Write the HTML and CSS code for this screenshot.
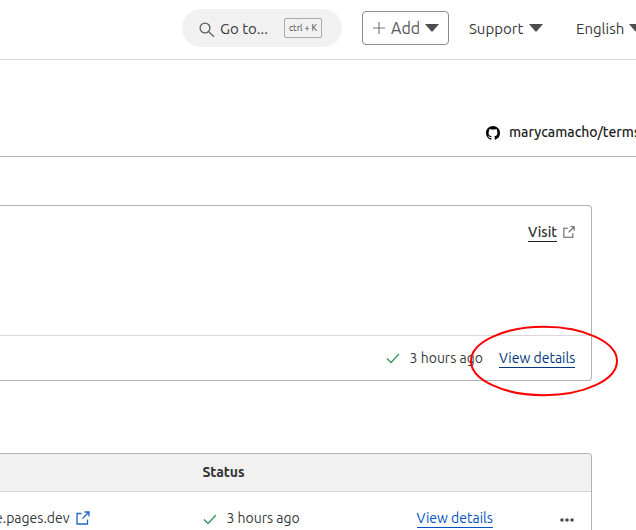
FILE: index.html
```
<!DOCTYPE html>
<html lang="en">
<head>
<meta charset="utf-8">
<title>Pages deployments</title>
<link rel="stylesheet" href="styles.css">
</head>
<body>
<header class="topbar">
  <div class="search">
    <svg class="search-icon" width="16" height="16" viewBox="0 0 16 16"><circle cx="6" cy="6" r="4.9"/><path d="M9.6 9.6 15 14.7"/></svg>
    <span class="search-label">Go to...</span>
    <kbd>ctrl + K</kbd>
  </div>
  <button class="add">
    <svg class="plus" width="12" height="12" viewBox="0 0 12 12"><path d="M6 0v12M0 6h12"/></svg>
    <span class="add-label">Add</span>
    <svg class="caret" width="14" height="8" viewBox="0 0 14 8"><path d="M0 0h14L8 7Q7 8 6 7Z"/></svg>
  </button>
  <div class="menu support"><span class="support-label">Support</span><svg class="caret" width="14" height="8" viewBox="0 0 14 8"><path d="M0 0h14L8 7Q7 8 6 7Z"/></svg></div>
  <div class="menu language"><span class="language-label">English</span><svg class="caret" width="14" height="8" viewBox="0 0 14 8"><path d="M0 0h14L8 7Q7 8 6 7Z"/></svg></div>
</header>
<section class="repo">
  <svg width="14" height="14" viewBox="0 0 16 16"><path d="M8 0C3.58 0 0 3.58 0 8c0 3.54 2.29 6.53 5.47 7.59.4.07.55-.17.55-.38 0-.19-.01-.82-.01-1.49-2.01.37-2.53-.49-2.69-.94-.09-.23-.48-.94-.82-1.13-.28-.15-.68-.52-.01-.53.63-.01 1.08.58 1.23.82.72 1.21 1.87.87 2.33.66.07-.52.28-.87.51-1.07-1.78-.2-3.64-.89-3.64-3.95 0-.87.31-1.59.82-2.15-.08-.2-.36-1.02.08-2.12 0 0 .67-.21 2.2.82.64-.18 1.32-.27 2-.27s1.36.09 2 .27c1.53-1.04 2.2-.82 2.2-.82.44 1.1.16 1.92.08 2.12.51.56.82 1.27.82 2.15 0 3.07-1.87 3.75-3.65 3.95.29.25.54.73.54 1.48 0 1.07-.01 1.93-.01 2.2 0 .21.15.46.55.38A8.01 8.01 0 0 0 16 8c0-4.42-3.58-8-8-8Z"/></svg>
  <span class="repo-name">marycamacho/terms</span>
</section>
<main>
  <section class="card">
    <div class="card-body">
      <a class="visit">Visit</a>
      <svg class="external" width="12" height="12" viewBox="0 0 14 14"><path d="M5.5 2.5H1v10.5h10.5V8.5M8.5 1H13v4.5M13 1 6.5 7.5"/></svg>
    </div>
    <div class="card-footer">
      <svg class="check" width="14" height="11" viewBox="0 0 14 11"><path d="m1 5.5 4 4L13 1"/></svg>
      <span class="time">3 hours ago</span>
      <div class="highlighted"><a class="details">View details</a><svg class="ring" width="148" height="72" viewBox="0 0 148 72"><ellipse cx="74" cy="36" rx="73" ry="34.2"/></svg></div>
    </div>
  </section>
  <section class="table">
    <div class="table-head">Status</div>
    <div class="table-row">
      <span class="domain">e.pages.dev</span>
      <svg class="external" width="14" height="14" viewBox="0 0 14 14"><path d="M5.5 2.5H1v10.5h10.5V8.5M8.5 1H13v4.5M13 1 6.5 7.5"/></svg>
      <svg class="check" width="14" height="11" viewBox="0 0 14 11"><path d="m1 5.5 4 4L13 1"/></svg>
      <span class="time">3 hours ago</span>
      <a class="details">View details</a>
      <svg class="more" width="14" height="4" viewBox="0 0 14 4"><circle cx="2" cy="2" r="1.8"/><circle cx="7" cy="2" r="1.8"/><circle cx="12" cy="2" r="1.8"/></svg>
    </div>
  </section>
</main>
</body>
</html>
```
FILE: styles.css
```
* { box-sizing: border-box; }
body {
  margin: 0;
  width: 636px;
  height: 530px;
  overflow: hidden;
  background: #fff;
  color: #36393a;
  font: 14px/20px Ubuntu, "Noto Sans", sans-serif;
  white-space: nowrap;
}
svg { flex: none; fill: none; display: block; }
.topbar {
  display: flex;
  align-items: center;
  height: 60px;
  padding: 0 0 3px 182px;
  border-bottom: 1px solid #d5d5d5;
  font-size: 15px;
  overflow: hidden;
}
.search {
  display: flex;
  flex: none;
  align-items: center;
  width: 160px;
  height: 38px;
  margin-right: 20px;
  padding-left: 17px;
  border-radius: 19px;
  background: #f1f1f1;
}
.search-icon { stroke: #5c5f60; stroke-width: 1.3; margin: 3px 5px 0 0; }
.search-label { width: 64px; padding-top: 2px; }
kbd {
  width: 38px;
  height: 20px;
  border: 1px solid #aaa;
  border-radius: 2px;
  color: #444;
  font: 9px/18px Ubuntu, "Noto Sans", sans-serif;
  text-align: center;
}
.add {
  display: flex;
  flex: none;
  align-items: center;
  width: 87px;
  height: 34px;
  margin-right: 20px;
  padding: 0 0 0 10px;
  border: 1px solid #8b8b8b;
  border-radius: 4px;
  background: #fff;
  color: #595959;
  font: 16px/20px Ubuntu, "Noto Sans", sans-serif;
}
.plus { stroke: #777; stroke-width: 1.2; }
.add-label { width: 34px; margin-left: 6px; text-align: left; }
.caret { fill: #4d4d4d; }
.menu { display: flex; flex: none; align-items: center; }
.menu span { padding-top: 2px; }
.menu .caret { margin-top: -1px; }
.support { width: 107px; }
.support-label { width: 60px; }
.language-label { width: 53px; }
.repo {
  display: flex;
  align-items: center;
  height: 97px;
  padding: 49px 0 0 486px;
  border-bottom: 1px solid #b2b2b2;
  overflow: hidden;
}
.repo svg { fill: #000; }
.repo-name { margin: 0 0 2px 9px; color: #222; font-weight: 500; }
main { width: 592px; padding-top: 48px; }
.card {
  height: 176px;
  margin-bottom: 72px;
  border: 1px solid #b2b2b2;
  border-left: 0;
  border-radius: 0 4px 4px 0;
}
.card-body {
  display: flex;
  align-items: flex-start;
  height: 130px;
  padding: 16px 0 0 528px;
  border-bottom: 1px solid #d9d9d9;
}
.visit { width: 29px; height: 20px; border-bottom: 1px solid #222; color: #313131; font-weight: 500; }
.card-body .external { margin: 4px 0 0 6px; stroke: #595959; stroke-width: 1.2; }
.card-footer { display: flex; align-items: center; height: 44px; padding-left: 386px; }
.check { stroke: #329659; stroke-width: 1.3; }
.time { width: 73px; margin-left: 9px; }
.card-footer .time { margin: 0 16.4px 0 9.6px; }
.details { display: block; width: 76px; height: 20px; border-bottom: 1px solid currentColor; color: #003681; }
.highlighted { position: relative; }
.ring { position: absolute; left: -29px; top: -23px; stroke: #f00; stroke-width: 2; }
.table { height: 100px; border: 1px solid #b2b2b2; border-left: 0; border-radius: 0 4px 0 0; }
.table-head {
  height: 38px;
  padding: 8px 0 0 202.4px;
  border-radius: 0 3px 0 0;
  border-bottom: 1px solid #d5d5d5;
  background: #f1f1f1;
  color: #313131;
  font-weight: 700;
}
.table-row { display: flex; align-items: flex-start; padding-top: 16px; }
.domain { width: 79px; margin-left: -5px; }
.table-row .external { width: 14px; margin: 3px 113px 0 2px; stroke: #2464c7; stroke-width: 1.3; }
.table-row .check { margin-top: 6px; }
.table-row .time { margin-left: 9.4px; }
.table-row .details { margin-left: 117.2px; color: #0051c3; }
.more { fill: #4d4d4d; margin: 10px 0 0 67.4px; }
```
